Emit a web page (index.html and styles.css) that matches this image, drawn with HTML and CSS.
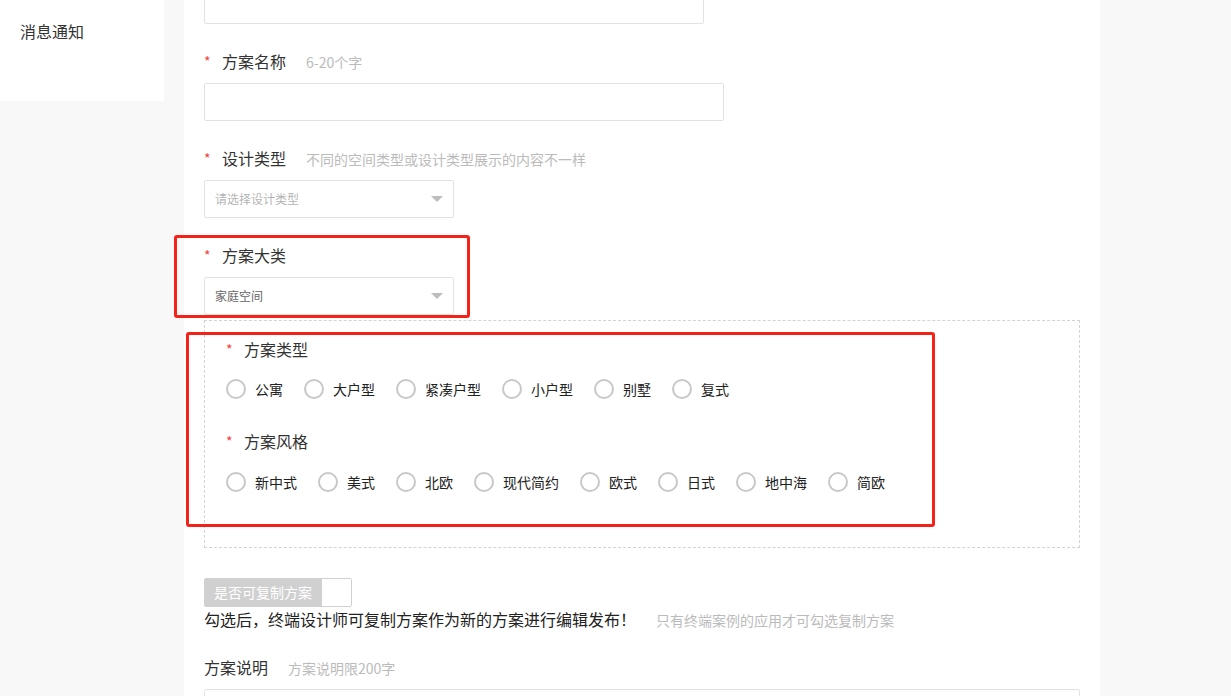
FILE: index.html
```html
<!DOCTYPE html>
<html lang="zh-CN">
<head>
    <meta charset="UTF-8">
    <meta name="viewport" content="width=device-width, initial-scale=1.0">
    <title>方案编辑</title>
    <link rel="stylesheet" href="styles.css">
</head>
<body>
    <div class="sidebar">
        <a href="#">消息通知</a>
    </div>

    <div class="panel">
        <!-- annotation boxes -->
        <div class="mark mark-category"></div>
        <div class="mark mark-style"></div>

        <div class="form">
            <div class="input input-short"></div>

            <div class="field">
                <div class="label"><span class="req">*</span>方案名称<span class="hint">6-20个字</span></div>
                <div class="input"></div>
            </div>

            <div class="field">
                <div class="label"><span class="req">*</span>设计类型<span class="hint">不同的空间类型或设计类型展示的内容不一样</span></div>
                <div class="select placeholder">请选择设计类型<span class="arrow"></span></div>
            </div>

            <div class="field">
                <div class="label"><span class="req">*</span>方案大类</div>
                <div class="select">家庭空间<span class="arrow"></span></div>
            </div>

            <div class="subbox">
                <div class="group">
                    <div class="label"><span class="req">*</span>方案类型</div>
                    <div class="radios">
                        <label class="radio"><span class="circle"></span>公寓</label>
                        <label class="radio"><span class="circle"></span>大户型</label>
                        <label class="radio"><span class="circle"></span>紧凑户型</label>
                        <label class="radio"><span class="circle"></span>小户型</label>
                        <label class="radio"><span class="circle"></span>别墅</label>
                        <label class="radio"><span class="circle"></span>复式</label>
                    </div>
                </div>
                <div class="group">
                    <div class="label"><span class="req">*</span>方案风格</div>
                    <div class="radios">
                        <label class="radio"><span class="circle"></span>新中式</label>
                        <label class="radio"><span class="circle"></span>美式</label>
                        <label class="radio"><span class="circle"></span>北欧</label>
                        <label class="radio"><span class="circle"></span>现代简约</label>
                        <label class="radio"><span class="circle"></span>欧式</label>
                        <label class="radio"><span class="circle"></span>日式</label>
                        <label class="radio"><span class="circle"></span>地中海</label>
                        <label class="radio"><span class="circle"></span>简欧</label>
                    </div>
                </div>
            </div>

            <div class="copy-toggle">
                <span class="toggle-text">是否可复制方案</span>
                <span class="toggle-box"></span>
            </div>
            <div class="copy-note">勾选后，终端设计师可复制方案作为新的方案进行编辑发布！<span class="hint">只有终端案例的应用才可勾选复制方案</span></div>

            <div class="field field-desc">
                <div class="label">方案说明<span class="hint">方案说明限200字</span></div>
                <div class="textarea"></div>
            </div>
        </div>
    </div>
</body>
</html>
```

FILE: styles.css
```css
body {
    margin: 0;
    background-color: #f8f8f8;
    font-family: "Noto Sans CJK SC", "Noto Sans", sans-serif;
    color: #333;
    display: flex;
    align-items: flex-start;
    height: 696px;
    overflow: hidden;
}

.sidebar {
    width: 164px;
    height: 101px;
    background-color: #fff;
    box-sizing: border-box;
    padding: 20px 20px;
}

.sidebar a {
    display: block;
    font-size: 16px;
    line-height: 22px;
    color: #333;
    text-decoration: none;
}

.panel {
    position: relative;
    margin-left: 20px;
    width: 916px;
    height: 696px;
    background-color: #fff;
    box-sizing: border-box;
    padding: 0 20px;
}

.form {
    margin-top: -14px;
}

.input,
.select,
.textarea {
    box-sizing: border-box;
    height: 38px;
    border: 1px solid #e2e2e2;
    border-radius: 2px;
    background: #fff;
}

.input { width: 520px; }
.input-short { width: 500px; }

.field {
    margin-top: 28px;
}

.label {
    height: 22px;
    line-height: 18px;
    font-size: 16px;
    color: #333;
    margin-bottom: 9px;
    white-space: nowrap;
}

.req {
    display: inline-block;
    width: 18px;
    color: #f5403a;
    font-size: 14px;
    vertical-align: top;
}

.hint {
    margin-left: 20px;
    font-size: 14px;
    color: #bbb;
}

.select {
    position: relative;
    width: 250px;
    padding-left: 10px;
    font-size: 12px;
    line-height: 36px;
    color: #666;
}

.select.placeholder {
    color: #b5b5b5;
}

.arrow {
    position: absolute;
    right: 10px;
    top: 15px;
    width: 0;
    height: 0;
    border-left: 6px solid transparent;
    border-right: 6px solid transparent;
    border-top: 6px solid #bdbdbd;
}

.subbox {
    width: 876px;
    box-sizing: border-box;
    margin-top: 5px;
    border: 1px dashed #d3d3d3;
    padding: 18px 20px 23px 21px;
}

.subbox .label {
    line-height: 20px;
    margin-bottom: 19px;
}

.group {
    margin-bottom: 32px;
}

.radios {
    display: flex;
    align-items: center;
    height: 20px;
    margin-top: -1px;
    margin-bottom: 1px;
}

.group + .group .radios {
    margin-top: 0;
    margin-bottom: 0;
}

.radio {
    display: flex;
    align-items: center;
    margin-right: 21px;
    font-size: 14px;
    color: #222;
}

.circle {
    width: 20px;
    height: 20px;
    box-sizing: border-box;
    border: 2px solid #c8c8c8;
    border-radius: 50%;
    margin-right: 9px;
}

.copy-toggle {
    display: flex;
    width: 148px;
    height: 29px;
    margin-top: 30px;
    border: 1px solid #d0d0d0;
    border-radius: 2px;
    box-sizing: border-box;
}

.toggle-text {
    width: 117px;
    background-color: #d0d0d0;
    color: #fff;
    font-size: 14px;
    line-height: 27px;
    padding-left: 9px;
    box-sizing: border-box;
    white-space: nowrap;
}

.toggle-box {
    flex: 1;
    background: #fff;
}

.copy-note {
    margin-top: 1px;
    font-size: 16px;
    line-height: 22px;
    color: #222;
    white-space: nowrap;
}

.field-desc {
    margin-top: 26px;
}

.field-desc .label {
    line-height: 20px;
    margin-bottom: 10px;
}

.textarea {
    width: 876px;
    height: 100px;
}

/* red annotation frames drawn over the form */
.mark {
    position: absolute;
    border: 3px solid #f5221a;
    border-radius: 3px;
    box-sizing: border-box;
    z-index: 5;
}

.mark-category {
    left: -10px;
    top: 235px;
    width: 296px;
    height: 83px;
}

.mark-style {
    left: 2px;
    top: 332px;
    width: 749px;
    height: 195px;
}
```
